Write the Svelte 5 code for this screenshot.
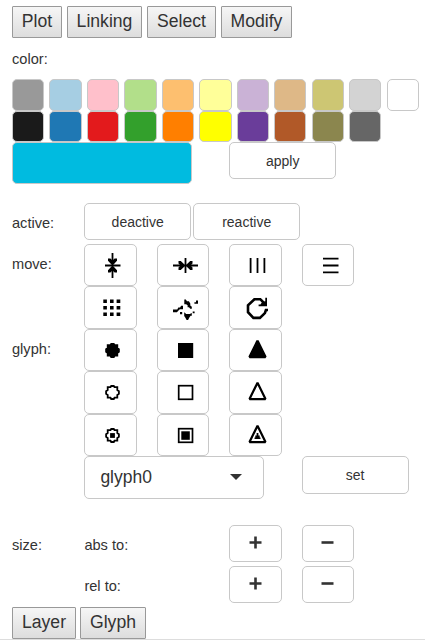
<script>
  const swatches = [
    ['#999999', '#a6cee3', '#ffc0cb', '#b2df8a', '#fdbf6f', '#ffff99', '#cab2d6', '#deb887', '#cdc673', '#d3d3d3', '#ffffff'],
    ['#1a1a1a', '#1f78b4', '#e31a1c', '#33a02c', '#ff7f00', '#ffff00', '#6a3d9a', '#b15928', '#8b864e', '#666666'],
  ];
  const tabs = [['Plot', 50], ['Linking', 75], ['Select', 69], ['Modify', 71]];
  const subTabs = [['Layer', 64], ['Glyph', 66]];
  const iconRows = [
    ['move:', ['vcenter', 'hcenter', 'vdist', 'hdist']],
    ['', ['grid', 'jitter', 'reset']],
    ['glyph:', ['circle', 'square', 'triangle']],
    ['', ['ocircle', 'osquare', 'otriangle']],
    ['', ['ccircle', 'csquare', 'ctriangle']],
  ];
  const ring = 'M26.2 14h2.6l.7 1.2h2.8v2.9l1.6 1.1v2.6l-1.6 1.1v2.8h-2.8l-.7 1.3h-2.6l-.7-1.3h-2.8v-2.8l-1.6-1.1v-2.6l1.6-1.1v-2.9h2.8z';
  const tri = 'M27.5 10.8L19.5 27.1H35.5z';
</script>

{#snippet icon(name)}
  <svg width="50" height="40" viewBox="0 0 50 40" fill="none" stroke="#000" stroke-width="1.8">
    {#if name === 'vcenter'}
      <path d="M27.5 8v25M20 20.5h15.5" />
      <path d="M23 13.5h2.4l2.1 2 2.1-2H32v2.3l-3.2 3.4h-2.6L23 15.8zM23 27.5h2.4l2.1-2 2.1 2H32v-2.3l-3.2-3.4h-2.6L23 25.2z" fill="#000" stroke="none" />
    {:else if name === 'hcenter'}
      <path d="M15 20.5h25M27.5 13v15" />
      <path d="M20.5 16v2.4l2 2.1-2 2.1V25h2.3l3.4-3.2v-2.6L22.8 16zM34.5 16v2.4l-2 2.1 2 2.1V25h-2.3l-3.4-3.2v-2.6l3.4-3.2z" fill="#000" stroke="none" />
    {:else if name === 'vdist'}
      <path d="M20.6 13v15M27.5 13v15M34.4 13v15" />
    {:else if name === 'hdist'}
      <path d="M20 13.6h15.5M20 20.5h15.5M20 27.4h15.5" />
    {:else if name === 'grid'}
      <path d="M18.3 13.3h3.6m3.1 0h3.6m3 0h3.7M18.3 19.8h3.6m3.1 0h3.6m3 0h3.7M18.3 26.2h3.6m3.1 0h3.6m3 0h3.7" stroke-width="3.5" />
    {:else if name === 'jitter'}
      <path d="M15 21.4h4.3l1-1.9h1.8l1-1.7h1.9v3.4h-3.2l-1.8 1.8-1 1.2h-4zM26.3 11.5h1.6l1 1.8h2l1.4 2.2v2l1.5 1.2v2h-1.6l-1.2-1.5h-1.4v-2l-1.5-1h-1.8zM38 12.5h2v3.3h-3.6v-1.5H38zM22 24h2.2v2.2H22zM26.2 24.2l2 1.7h3.6l2-1v2.8h-1.2l-1.4 2-1.1 2.2h-1.5l-1.2-2.2-1.2-1.8zM34.7 23.5h1.9v1.8h-1.9z" fill="#000" stroke="none" />
    {:else if name === 'reset'}
      <path d="M34 15L30.3 11.2H24.4L18 17.4v6.8l5.4 5.7h6.5l5-4.8 1-3.1h2.1" stroke-width="2.6" />
      <path d="M35.3 9.8h1.7V18.3h-8.4v-1.7h1.8l1.4-2.2 3.5-1.2z" fill="#000" stroke="none" />
    {:else if name === 'circle'}
      <path d={ring} fill="#000" />
    {:else if name === 'ocircle' || name === 'ccircle'}
      <path d={ring} />
      {#if name === 'ccircle'}<rect x="25.1" y="18.1" width="4.8" height="4.8" fill="#000" stroke="none" />{/if}
    {:else if name === 'square'}
      <rect x="20" y="13" width="15.2" height="15" fill="#000" stroke="none" />
    {:else if name === 'osquare' || name === 'csquare'}
      <rect x="20.7" y="13.7" width="13.8" height="13.6" stroke-width="1.7" />
      {#if name === 'csquare'}<rect x="23.3" y="16.3" width="8.5" height="8.5" fill="#000" stroke="none" />{/if}
    {:else if name === 'triangle'}
      <path d={tri} fill="#000" stroke-linejoin="bevel" stroke-width="2.4" />
    {:else}
      <path d={tri} stroke-linejoin="bevel" stroke-width="2.2" />
      {#if name === 'ctriangle'}<path d="M26.6 18h1.8v2.5h1.3v2h.8v1.6h-6v-1.6h.8v-2h1.3z" fill="#000" stroke="none" />{/if}
    {/if}
  </svg>
{/snippet}

<main>
  <nav class="tabs">
    {#each tabs as [name, w]}<button class="tab" style:width="{w}px">{name}</button>{/each}
  </nav>
  <div class="heading">color:</div>
  {#each swatches as row}
    <div class="swatches">
      {#each row as c}<button class="box swatch" aria-label={c} style:background={c}></button>{/each}
    </div>
  {/each}
  <div class="current">
    <div class="box chosen"></div>
    <button class="box wide">apply</button>
  </div>
  <div class="active">
    <span class="label">active:</span>
    <button class="box wide">deactive</button>
    <button class="box wide">reactive</button>
  </div>
  {#each iconRows as [label, icons]}
    <div class="icons">
      <span class="label">{label}</span>
      {#each icons as name}<button class="box cell" aria-label={name}>{@render icon(name)}</button>{/each}
    </div>
  {/each}
  <div class="choose">
    <div class="box select"><span>glyph0</span><i></i></div>
    <button class="box wide">set</button>
  </div>
  {#each [['size:', 'abs to:'], ['', 'rel to:']] as [group, label]}
    <div class="size">
      <span class="label">{group}</span>
      <span class="kind">{label}</span>
      <button class="box step" aria-label="increase"><svg width="13" height="13"><path d="M.5 6.5h12M6.5.5v12" /></svg></button>
      <button class="box step" aria-label="decrease"><svg width="13" height="13"><path d="M.5 6.5h12" /></svg></button>
    </div>
  {/each}
  <nav class="tabs sub">
    {#each subTabs as [name, w]}<button class="tab" style:width="{w}px">{name}</button>{/each}
  </nav>
</main>

<style>
  :global(body) { background: #fff; overflow: hidden; }
  main {
    box-sizing: border-box;
    width: 425px;
    height: 641px;
    padding: 6px 0 0 12px;
    font: 14.6px/20px "Liberation Sans", Arial, sans-serif;
    color: #333;
    overflow: hidden;
  }
  button { font: inherit; color: inherit; padding: 0; margin: 0; flex: none; }
  .tabs { display: flex; gap: 5px; height: 32px; }
  .tab {
    box-sizing: border-box;
    height: 32px;
    padding-bottom: 2px;
    border: 1px solid #999;
    border-radius: 1px;
    background: linear-gradient(#f6f6f6, #dddddd);
    font-size: 17.6px;
  }
  .heading { height: 41px; padding-top: 11px; box-sizing: border-box; }
  .box {
    box-sizing: border-box;
    border: 1px solid #c8c8c8;
    border-radius: 5px;
    background: #fff;
    flex: none;
  }
  .swatches { display: flex; gap: 5.4px; height: 31.5px; }
  .swatch { width: 32.1px; height: 31.5px; }
  .current { display: flex; gap: 37.2px; height: 61px; }
  .chosen { width: 180px; height: 42px; background: #00bbe0; }
  .wide { width: 107px; height: 37px; font-size: 14px; }
  .active { display: flex; gap: 2px; height: 41px; }
  .label { width: 72.4px; flex: none; padding-top: 10px; }
  .active .label { width: 70.2px; }
  .icons { display: flex; height: 42.4px; }
  .cell { width: 52.4px; height: 42.4px; margin-right: 20px; overflow: hidden; }
  .cell svg { display: block; }
  .choose { display: flex; gap: 37.6px; height: 69px; padding-left: 72.4px; }
  .select {
    display: flex;
    align-items: center;
    justify-content: space-between;
    width: 179.6px;
    height: 43px;
    padding: 0 21px 0 15px;
    font-size: 17.5px;
  }
  .select i { border: 6.5px solid transparent; border-top-color: #333; border-bottom: 0; }
  .choose .wide { height: 38px; }
  .size { display: flex; height: 41px; }
  .kind { width: 144.8px; flex: none; padding-top: 10px; }
  .step { width: 52.4px; height: 37px; margin-right: 20px; display: flex; align-items: center; justify-content: center; }
  .step svg { display: block; stroke: #333; stroke-width: 2.6; margin-top: -1px; }
  .sub { gap: 4px; margin-left: -12px; padding-left: 12px; border-bottom: 1px solid #ddd; }
</style>
